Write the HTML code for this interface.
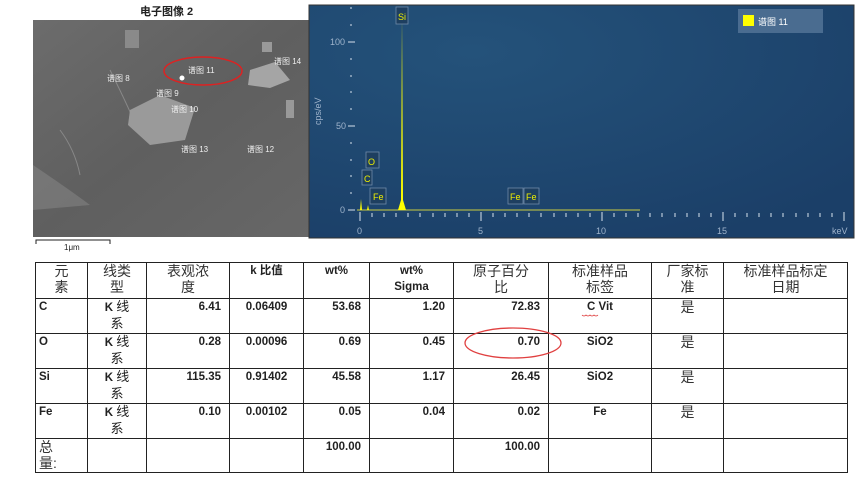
<!DOCTYPE html>
<html><head><meta charset="utf-8">
<style>
body{margin:0;width:858px;height:479px;background:#fff;position:relative;overflow:hidden;font-family:"Liberation Sans","Noto Sans CJK SC",sans-serif}
.a{position:absolute}
table{position:absolute;left:35px;top:262px;border-collapse:collapse;table-layout:fixed}
td{border:1.5px solid #222;vertical-align:top;padding:0 3px;font-size:11.5px;color:#222;line-height:16px;font-weight:bold}
td.c{font-weight:normal;font-size:14px;color:#333;line-height:16px;text-align:center}
td.r{text-align:right;padding-right:8px}
td.m{text-align:center}
</style></head><body>
<div class="a" style="left:140px;top:3px;font-size:11px;font-weight:bold;color:#222">电子图像 2</div>
<svg class="a" style="left:0;top:0" width="858" height="260">
<defs>
<linearGradient id="sem" x1="0" y1="0" x2="1" y2="1"><stop offset="0" stop-color="#6c6c6c"/><stop offset="0.5" stop-color="#5f5f5f"/><stop offset="1" stop-color="#676767"/></linearGradient>
<radialGradient id="bl" cx="0.3" cy="0.2" r="0.9"><stop offset="0" stop-color="#24527a"/><stop offset="1" stop-color="#1b3f68"/></radialGradient>
</defs>
<rect x="33" y="20" width="276" height="217" fill="url(#sem)"/>
<path d="M33 165 Q70 190 90 205 L33 210Z" fill="#8a8a8a" opacity=".5"/>
<path d="M110 70 Q130 110 140 135 M60 130 Q75 150 80 175" stroke="#888" fill="none"/>
<path d="M130 110 L160 95 L195 108 L185 140 L150 145 L128 125Z" fill="#9a9a9a"/>
<path d="M250 70 L275 62 L290 80 L270 88 L248 85Z" fill="#a5a5a5"/>
<rect x="286" y="100" width="8" height="18" fill="#999"/>
<rect x="262" y="42" width="10" height="10" fill="#999"/>
<rect x="125" y="30" width="14" height="18" fill="#8a8a8a"/>
<g fill="#eee" font-size="8" font-family="Liberation Sans,Noto Sans CJK SC,sans-serif">
<text x="188" y="73">谱图 11</text><text x="274" y="64">谱图 14</text><text x="107" y="81">谱图 8</text>
<text x="156" y="96">谱图 9</text><text x="171" y="112">谱图 10</text><text x="181" y="152">谱图 13</text><text x="247" y="152">谱图 12</text>
</g>
<circle cx="182" cy="78" r="2.5" fill="#fff"/>
<ellipse cx="203" cy="71" rx="39" ry="14" fill="none" stroke="#d22" stroke-width="1.5"/>
<path d="M36 244 V240 H110 V244" stroke="#222" fill="none"/>
<text x="64" y="250" font-size="8" fill="#222">1μm</text>
<line x1="309" y1="5" x2="309" y2="237" stroke="#222"/>
<rect x="309" y="5" width="545" height="233" fill="url(#bl)" stroke="#333"/>
<rect x="738" y="9" width="85" height="24" fill="#4a6c90"/>
<rect x="743" y="15" width="11" height="11" fill="#ff0"/>
<text x="758" y="25" font-size="9" fill="#fff" font-family="Liberation Sans,Noto Sans CJK SC,sans-serif">谱图 11</text>
<g fill="#9fb4cc" font-size="9" font-family="Liberation Sans,sans-serif">
<text x="330" y="45">100</text><text x="336" y="129">50</text><text x="340" y="213">0</text>
<text x="357" y="234">0</text><text x="478" y="234">5</text><text x="596" y="234">10</text><text x="717" y="234">15</text><text x="832" y="234">keV</text>
<text transform="translate(321,125) rotate(-90)">cps/eV</text>
</g>
<g stroke="#b8c8d8" stroke-width="1.2">
<line x1="348" y1="42" x2="355" y2="42"/><line x1="348" y1="126" x2="355" y2="126"/><line x1="348" y1="210" x2="355" y2="210"/>
<line x1="350" y1="8" x2="352" y2="8"/><line x1="350" y1="25" x2="352" y2="25"/><line x1="350" y1="59" x2="352" y2="59"/><line x1="350" y1="76" x2="352" y2="76"/><line x1="350" y1="92" x2="352" y2="92"/><line x1="350" y1="109" x2="352" y2="109"/><line x1="350" y1="143" x2="352" y2="143"/><line x1="350" y1="160" x2="352" y2="160"/><line x1="350" y1="176" x2="352" y2="176"/><line x1="350" y1="193" x2="352" y2="193"/>
<path d="M360 212V221M481 212V221M602 212V221M723 212V221M844 212V221"/>
<path d="M372 213v4M384 213v4M396 213v4M408 213v4M420 213v4M433 213v4M445 213v4M457 213v4M469 213v4M493 213v4M505 213v4M517 213v4M529 213v4M541 213v4M554 213v4M566 213v4M578 213v4M590 213v4M614 213v4M626 213v4M638 213v4M650 213v4M662 213v4M675 213v4M687 213v4M699 213v4M711 213v4M735 213v4M747 213v4M759 213v4M771 213v4M783 213v4M796 213v4M808 213v4M820 213v4M832 213v4"/>
</g>
<line x1="357" y1="210" x2="640" y2="210" stroke="#cccc40" stroke-width="1"/>
<path d="M360 210 L361 199 L362 210 L367 210 L368 205 L369 210 L398 210 L401 200 L402 15 L403 200 L406 210Z" fill="#ff0"/>
<g fill="#1e3f60" stroke="#6f8aa8" stroke-width="0.8" font-size="9" font-family="Liberation Sans,sans-serif">
<rect x="396" y="7" width="12" height="17"/><rect x="362" y="170" width="10" height="15"/><rect x="366" y="152" width="13" height="16"/>
<rect x="370" y="188" width="16" height="16"/><rect x="508" y="188" width="15" height="16"/><rect x="524" y="188" width="15" height="16"/>
</g>
<g fill="#ee0" font-size="9" font-family="Liberation Sans,sans-serif">
<text x="398" y="20">Si</text><text x="364" y="182">C</text><text x="368" y="165">O</text><text x="373" y="200">Fe</text><text x="510" y="200">Fe</text><text x="526" y="200">Fe</text>
</g>
</svg>
<table>
<colgroup><col style="width:52px"><col style="width:59px"><col style="width:83px"><col style="width:74px"><col style="width:66px"><col style="width:84px"><col style="width:95px"><col style="width:103px"><col style="width:72px"><col style="width:124px"></colgroup>
<tr style="height:36px"><td class="c">元<br>素</td><td class="c">线类<br>型</td><td class="c">表观浓<br>度</td><td class="m">k 比值</td><td class="m">wt%</td><td class="m">wt%<br>Sigma</td><td class="c">原子百分<br>比</td><td class="c">标准样品<br>标签</td><td class="c">厂家标<br>准</td><td class="c">标准样品标定<br>日期</td></tr>
<tr style="height:35px"><td>C</td><td class="m">K <span style="font-weight:normal;font-size:13px">线<br>系</span></td><td class="r">6.41</td><td class="m">0.06409</td><td class="r">53.68</td><td class="r">1.20</td><td class="r">72.83</td><td class="m">C Vit</td><td class="c">是</td><td></td></tr>
<tr style="height:34px"><td>O</td><td class="m">K <span style="font-weight:normal;font-size:13px">线<br>系</span></td><td class="r">0.28</td><td class="m">0.00096</td><td class="r">0.69</td><td class="r">0.45</td><td class="r">0.70</td><td class="m">SiO2</td><td class="c">是</td><td></td></tr>
<tr style="height:35px"><td>Si</td><td class="m">K <span style="font-weight:normal;font-size:13px">线<br>系</span></td><td class="r">115.35</td><td class="m">0.91402</td><td class="r">45.58</td><td class="r">1.17</td><td class="r">26.45</td><td class="m">SiO2</td><td class="c">是</td><td></td></tr>
<tr style="height:35px"><td>Fe</td><td class="m">K <span style="font-weight:normal;font-size:13px">线<br>系</span></td><td class="r">0.10</td><td class="m">0.00102</td><td class="r">0.05</td><td class="r">0.04</td><td class="r">0.02</td><td class="m">Fe</td><td class="c">是</td><td></td></tr>
<tr style="height:34px"><td class="c" style="text-align:left">总<br>量:</td><td></td><td></td><td></td><td class="r">100.00</td><td></td><td class="r">100.00</td><td></td><td></td><td></td></tr>
</table>
<svg class="a" style="left:0;top:0" width="858" height="479"><ellipse cx="513" cy="343" rx="48" ry="15" fill="none" stroke="#e04040" stroke-width="1.3"/><path d="M582 315 q2 2 4 0 q2 2 4 0 q2 2 4 0 q2 2 4 0" stroke="#d33" fill="none" stroke-width="0.8"/></svg>
</body></html>
